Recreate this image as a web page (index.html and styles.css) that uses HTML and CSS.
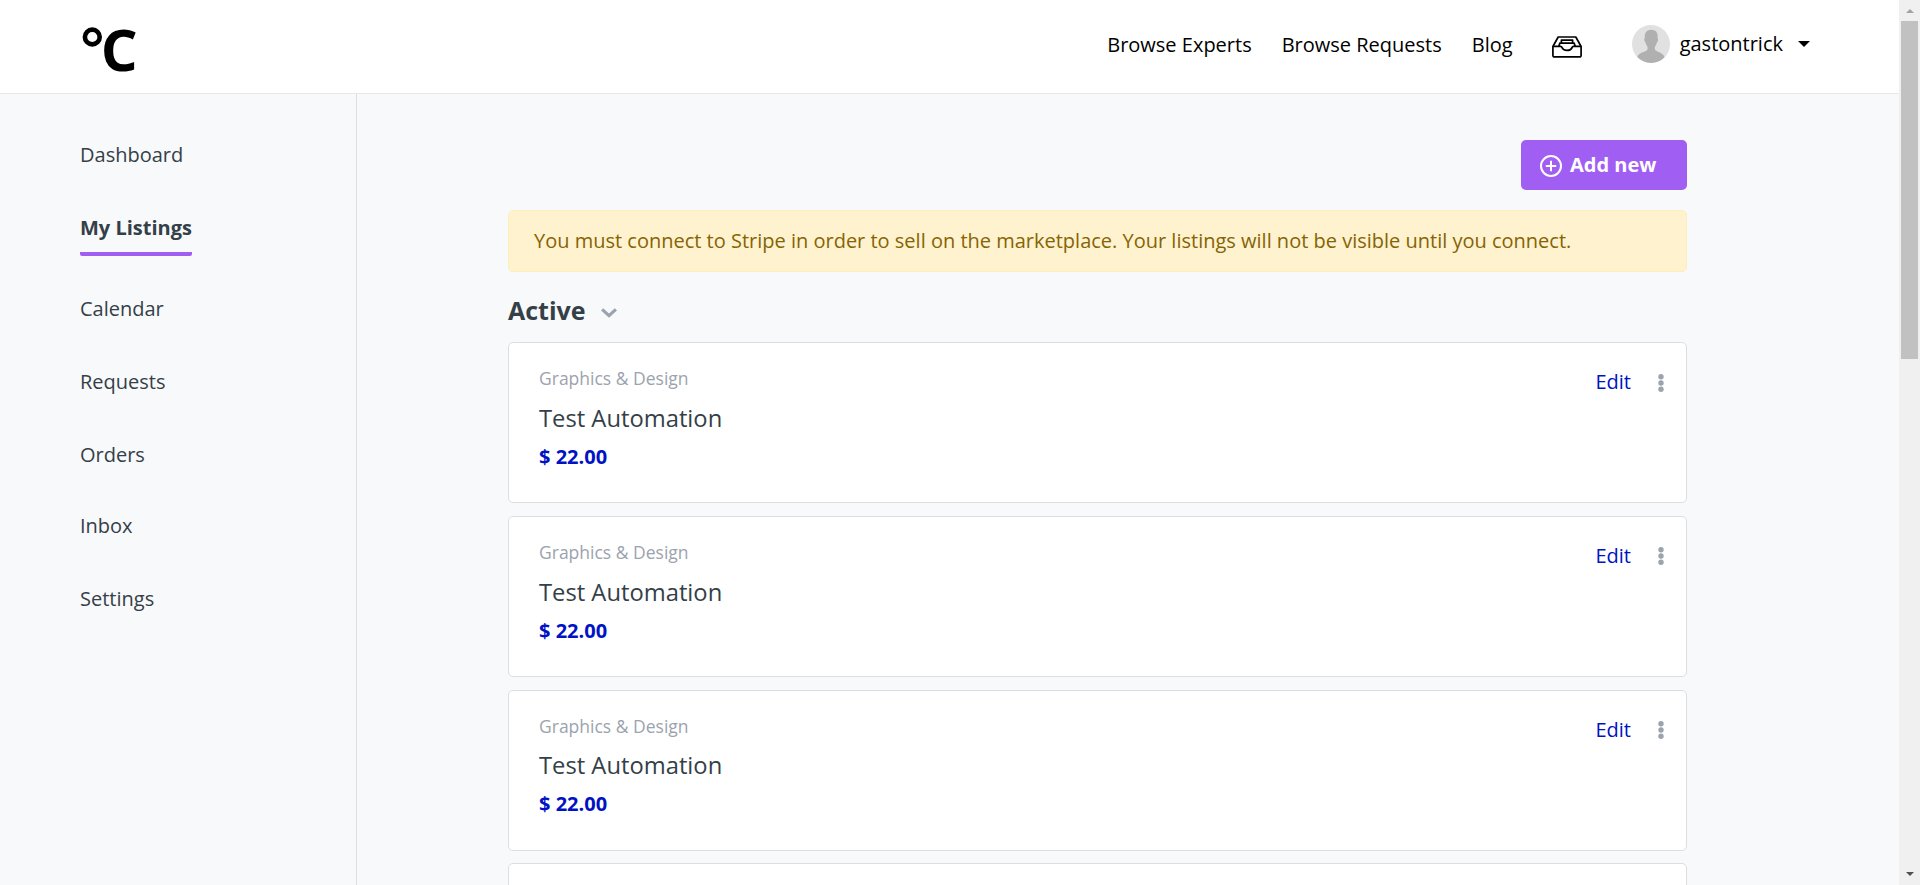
FILE: index.html
```html
<!DOCTYPE html>
<html lang="en">
<head>
<meta charset="utf-8">
<title>My Listings</title>
<link rel="stylesheet" href="styles.css">
</head>
<body>
<div class="window">
  <div class="page">
    <header class="header">
      <a class="logo" aria-label="Home">
        <svg width="70" height="84" viewBox="0 -16 70 84">
          <circle cx="12.3" cy="14" r="7.4" fill="none" stroke="#000" stroke-width="4.6"/>
          <text class="logo-letter" x="20.8" y="48">C</text>
        </svg>
      </a>
      <nav class="nav">
        <a class="nav-link">Browse Experts</a>
        <a class="nav-link">Browse Requests</a>
        <a class="nav-link">Blog</a>
        <a class="nav-inbox" aria-label="Inbox">
          <svg width="30" height="22" viewBox="0 0 30 22" fill="none" stroke="#000" stroke-width="1.7" stroke-linejoin="round">
            <path d="M6.2 1H23.8L29.1 10.5V19.2Q29.1 20.9 27.4 20.9H2.6Q.9 20.9 .9 19.2V10.5Z"/>
            <path d="M.9 10.4H8.6Q9.6 10.4 10 11.6Q11 14.4 15 14.4T20 11.6Q20.4 10.4 21.4 10.4H29.1"/>
            <path d="M6.8 10.2L7.8 7.2H22.2L23.2 10.2M9.4 7V4.1H20.6V7"/>
          </svg>
        </a>
        <a class="user">
          <svg class="avatar" width="38" height="38" viewBox="0 0 38 38">
            <circle cx="19" cy="19" r="19" fill="#e1e1e1"/>
            <path fill="#b0b0b0" d="M19.2 4.8C14.7 4.8 12.5 8 12.8 12.3C12.9 13.3 12 13.8 12.4 15.5C12.7 17 13.3 17 13.6 17.4C14 19.5 15 20.8 15.5 21.5V24.5C14.5 27 7 27 5.3 32A19 19 0 0 0 32.6 32.2C31 27 23.7 27 22.9 24.5V21.5C23.5 20.7 24.5 19.5 24.8 17.4C25.2 17 25.8 16.9 26 15.5C26.3 13.8 25.5 13.3 25.6 12.3C26 8 24 4.9 19.2 4.8Z"/>
          </svg>
          <span class="user-name">gastontrick</span>
          <span class="caret"></span>
        </a>
      </nav>
    </header>
    <div class="body">
      <aside class="sidebar">
        <a class="side-link">Dashboard</a>
        <a class="side-link active">My Listings</a>
        <a class="side-link">Calendar</a>
        <a class="side-link">Requests</a>
        <a class="side-link">Orders</a>
        <a class="side-link side-inbox">Inbox</a>
        <a class="side-link">Settings</a>
      </aside>
      <main class="main">
        <a class="add">
          <svg width="22" height="22" viewBox="0 0 22 22" fill="none" stroke="#fff" stroke-width="2">
            <circle cx="11" cy="11" r="10"/>
            <path d="M11 5.8V16.2M5.8 11H16.2"/>
          </svg>
          <span>Add new</span>
        </a>
        <div class="alert"><span class="alert-text">You must connect to Stripe in order to sell on the marketplace. Your listings will not be visible until you connect.</span></div>
        <h2 class="section"><span>Active</span>
          <svg width="16" height="10" viewBox="0 0 16 10" fill="none" stroke="#9ba3ad" stroke-width="3.1"><path d="M1.1 1.3L8 7.7L14.9 1.3"/></svg>
        </h2>
        <div class="cards">
          <article class="card">
            <div class="info"><div class="category">Graphics &amp; Design</div><div class="title">Test Automation</div><div class="price">$ 22.00</div></div>
            <a class="edit">Edit</a>
            <svg class="dots" width="6" height="18" viewBox="0 0 6 18"><circle cx="3" cy="2.8" r="2.7"/><circle cx="3" cy="9" r="2.7"/><circle cx="3" cy="15.2" r="2.7"/></svg>
          </article>
          <article class="card">
            <div class="info"><div class="category">Graphics &amp; Design</div><div class="title">Test Automation</div><div class="price">$ 22.00</div></div>
            <a class="edit">Edit</a>
            <svg class="dots" width="6" height="18" viewBox="0 0 6 18"><circle cx="3" cy="2.8" r="2.7"/><circle cx="3" cy="9" r="2.7"/><circle cx="3" cy="15.2" r="2.7"/></svg>
          </article>
          <article class="card">
            <div class="info"><div class="category">Graphics &amp; Design</div><div class="title">Test Automation</div><div class="price">$ 22.00</div></div>
            <a class="edit">Edit</a>
            <svg class="dots" width="6" height="18" viewBox="0 0 6 18"><circle cx="3" cy="2.8" r="2.7"/><circle cx="3" cy="9" r="2.7"/><circle cx="3" cy="15.2" r="2.7"/></svg>
          </article>
          <article class="card"></article>
        </div>
      </main>
    </div>
  </div>
  <div class="scrollbar">
    <span class="arrow up"></span>
    <span class="thumb"></span>
    <span class="arrow down"></span>
  </div>
</div>
</body>
</html>
```
FILE: styles.css
```css
* { box-sizing: border-box; }
body {
  margin: 0;
  font-family: "Open Sans", "Noto Sans", sans-serif;
  font-size: 20px;
  line-height: 30px;
  color: #343f48;
  overflow: hidden;
}
svg { display: block; flex: none; }
.window { display: flex; height: 885px; overflow: hidden; }
.page { flex: 1; display: flex; flex-direction: column; background: #f8f9fb; min-width: 0; }

.header {
  flex: none;
  display: flex;
  justify-content: space-between;
  align-items: flex-start;
  height: 94px;
  padding: 0 89px 0 80px;
  background: #fff;
  border-bottom: 1px solid #e7e8ea;
  color: #000;
}
.logo { padding-top: 7px; }
.logo-letter { font-family: "Open Sans", sans-serif; font-weight: 700; font-size: 58px; }
.nav { display: flex; align-items: flex-start; white-space: nowrap; }
.nav-link { padding-top: 30px; margin-right: 30px; }
.nav-inbox { padding-top: 35.5px; margin: 0 50px 0 9px; }
.user { display: flex; align-items: flex-start; padding-top: 25px; }
.user-name { margin: 4px 15px 0 10px; }
.caret { margin-top: 16px; border: 6px solid transparent; border-top-color: #000; border-bottom: 0; }

.body { flex: 1; display: flex; min-height: 0; }
.sidebar {
  flex: none;
  width: 357px;
  padding: 46px 0 0 80px;
  border-right: 1px solid #d9e0e8;
  display: flex;
  flex-direction: column;
  align-items: flex-start;
  gap: 43px;
}
.side-link { height: 30px; }
.side-link.active { font-weight: 700; height: 43px; margin-bottom: -5px; border-bottom: 4px solid #a05ff2; border-radius: 2px; }
.side-inbox { margin-top: -2px; }

.main { display: flex; flex-direction: column; width: 1330px; padding: 46px 0 0 151px; }
.add {
  align-self: flex-end;
  flex: none;
  display: flex;
  align-items: center;
  gap: 8px;
  width: 166px;
  height: 50px;
  padding-left: 19px;
  border-radius: 5px;
  background: #a05ff2;
  color: #fff;
  font-weight: 700;
}
.add svg { margin-top: 2px; }
.alert {
  flex: none;
  height: 62px;
  margin-top: 20px;
  padding: 15px 25px;
  border: 1px solid #ffeeba;
  border-radius: 5px;
  background: #fff2cf;
  color: #856404;
  white-space: nowrap;
}
.section { display: flex; align-items: center; gap: 15px; height: 38px; margin: 19px 0 13px; font-size: 25px; font-weight: 700; line-height: 38px; }
.section svg { margin-top: 6px; }
.cards { display: flex; flex-direction: column; gap: 12.5px; }
.card {
  flex: none;
  display: flex;
  align-items: flex-start;
  height: 161.25px;
  padding: 0 22px 0 30px;
  background: #fff;
  border: 1px solid #dcdfe2;
  border-radius: 5px;
}
.info { flex: 1; padding-top: 21px; }
.category { font-size: 17.5px; line-height: 28px; color: #9ba3ad; }
.title { margin-top: 7.8px; font-size: 23.75px; line-height: 36px; }
.price { margin-top: 6.2px; font-weight: 700; color: #0012c4; }
.edit { margin: 24px 27px 0 0; color: #0012c4; }
.dots { margin-top: 30.5px; fill: #9ba3ad; }

.scrollbar { flex: none; width: 21px; display: flex; flex-direction: column; align-items: center; background: #f0f0f0; }
.arrow { border: 4.5px solid transparent; }
.up { margin-top: 9px; border-top: 0; border-bottom-color: #a3a3a3; }
.thumb { width: 17px; height: 338px; margin-top: 7.5px; background: #c1c1c1; }
.down { margin: auto 0 9px; border-bottom: 0; border-top-color: #505050; }
```
